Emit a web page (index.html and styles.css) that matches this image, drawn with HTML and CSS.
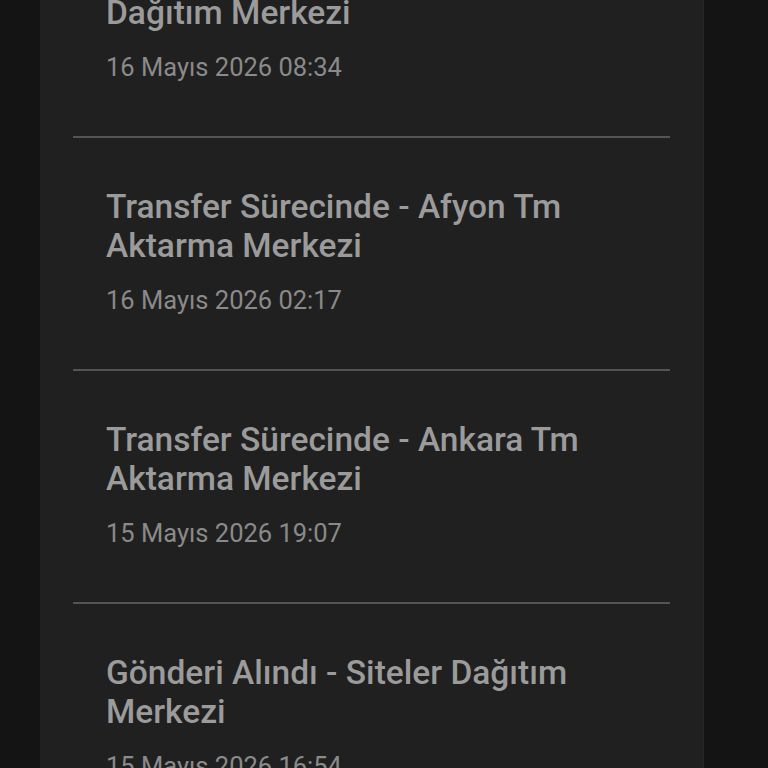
FILE: index.html
```html
<!DOCTYPE html>
<html lang="tr">
<head>
  <meta charset="UTF-8">
  <title>Gönderi Hareketleri</title>
  <link rel="stylesheet" href="styles.css">
</head>
<body>

  <div class="panel">
    <div class="hareket-lista">
      <div class="hareket">
        <div class="baslik">Transfer Sürecinde - Siteler Dağıtım Merkezi</div>
        <div class="tarih">16 Mayıs 2026 08:34</div>
      </div>
      <div class="hareket">
        <div class="baslik">Transfer Sürecinde - Afyon Tm Aktarma Merkezi</div>
        <div class="tarih">16 Mayıs 2026 02:17</div>
      </div>
      <div class="hareket">
        <div class="baslik">Transfer Sürecinde - Ankara Tm Aktarma Merkezi</div>
        <div class="tarih">15 Mayıs 2026 19:07</div>
      </div>
      <div class="hareket">
        <div class="baslik">Gönderi Alındı - Siteler Dağıtım Merkezi</div>
        <div class="tarih">15 Mayıs 2026 16:54</div>
      </div>
    </div>
  </div>

</body>
</html>
```

FILE: styles.css
```css
html, body {
  height: 100%;
}
body {
  background: #141414;
  color: #9b9b9b;
  font-family: Roboto, "Liberation Sans", sans-serif;
  margin: 0;
  padding: 0;
  overflow: hidden;
}
.panel {
  margin: 0 64px 0 40px;
  min-height: 100%;
  background: #202020;
  padding: 0 33px;
  box-sizing: border-box;
  border-right: 1px solid #262626;
}
.hareket-lista {
  margin-top: -95px;
}
.hareket {
  padding: 49px 33px 52px;
  border-bottom: 2px solid #545454;
}
.baslik {
  font-size: 33.5px;
  font-weight: 500;
  line-height: 39px;
  color: #9b9b9b;
}
.tarih {
  margin-top: 19px;
  font-size: 25.5px;
  line-height: 33px;
  color: #8a8a8a;
}
```
